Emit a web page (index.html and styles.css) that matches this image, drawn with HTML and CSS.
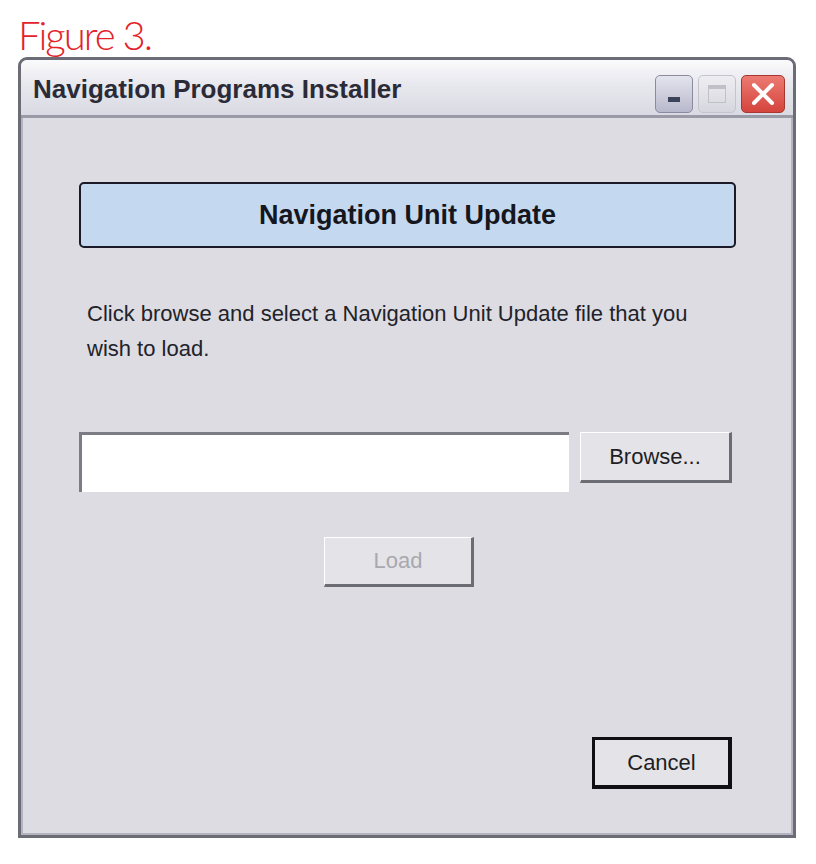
FILE: index.html
```html
<!DOCTYPE html>
<html lang="en">
<head>
    <meta charset="UTF-8">
    <meta name="viewport" content="width=device-width, initial-scale=1.0">
    <title>Navigation Programs Installer</title>
    <link rel="stylesheet" href="styles.css">
</head>
<body>
    <div class="figure-label">Figure 3.</div>
    <div class="window">
        <div class="titlebar">
            <span class="title">Navigation Programs Installer</span>
            <div class="controls">
                <div class="ctrl minimize"><span class="min-bar"></span></div>
                <div class="ctrl maximize"><span class="max-box"></span></div>
                <div class="ctrl close">
                    <svg width="26" height="26" viewBox="0 0 26 26">
                        <path d="M4 4 L22 22 M22 4 L4 22" stroke="#fff" stroke-width="4" stroke-linecap="round"/>
                    </svg>
                </div>
            </div>
        </div>
        <div class="client">
            <div class="banner">Navigation Unit Update</div>
            <p class="instructions">Click browse and select a Navigation Unit Update file that you wish to load.</p>
            <div class="file-row">
                <div class="file-input"></div>
                <button class="btn browse">Browse...</button>
            </div>
            <div class="load-row">
                <button class="btn load" disabled>Load</button>
            </div>
            <div class="footer">
                <button class="btn cancel">Cancel</button>
            </div>
        </div>
    </div>
</body>
</html>
```

FILE: styles.css
```css
body {
    margin: 0;
    padding: 0;
    background: #fff;
    font-family: 'Liberation Sans', Arial, sans-serif;
}

.figure-label {
    margin: 14px 0 0 18px;
    height: 43px;
    font-family: 'Lato', 'Liberation Sans', sans-serif;
    font-weight: 300;
    font-size: 40px;
    line-height: 43px;
    color: #e3232b;
    letter-spacing: -2px;
}

.window {
    width: 772px;
    height: 775px;
    margin-left: 18px;
    border: 3px solid #6c6c76;
    border-radius: 9px 9px 0 0;
    background: #dcdce2;
    display: flex;
    flex-direction: column;
}

.titlebar {
    height: 55px;
    display: flex;
    align-items: center;
    justify-content: space-between;
    padding: 0 8px 0 12px;
    background: linear-gradient(#fbfbfd, #e9e9ef 40%, #d9d9e3);
    border-bottom: 3px solid #9a9aa6;
    border-radius: 6px 6px 0 0;
}

.title {
    font-family: 'Liberation Sans', sans-serif;
    font-weight: bold;
    font-size: 26px;
    color: #2b2b38;
    padding-top: 4px;
}

.controls {
    display: flex;
    gap: 5px;
    padding-top: 12px;
}

.ctrl {
    width: 38px;
    height: 38px;
    border-radius: 5px;
    display: flex;
    align-items: center;
    justify-content: center;
    box-sizing: border-box;
}

.minimize {
    background: linear-gradient(#e4e4ee, #b8b8cc);
    border: 1px solid #8a8aa0;
}

.min-bar {
    width: 12px;
    height: 5px;
    background: #3c4258;
    margin-top: 12px;
}

.maximize {
    background: linear-gradient(#eeeef2, #d6d6de);
    border: 1px solid #c4c4cc;
}

.max-box {
    width: 18px;
    height: 18px;
    border: 1px solid #c0c0c8;
    border-top-width: 4px;
    box-sizing: border-box;
}

.close {
    width: 44px;
    background: linear-gradient(#ec7a72, #d4443c);
    border: 1px solid #a83632;
}

.client {
    flex: 1;
    padding: 64px 55px 0 56px;
    border: 2px solid #b4b4c0;
    border-top: none;
    display: flex;
    flex-direction: column;
}

.banner {
    height: 62px;
    line-height: 62px;
    background: #c4d9ef;
    border: 2px solid #1a1a28;
    border-radius: 5px;
    text-align: center;
    font-weight: bold;
    font-size: 27px;
    color: #16161e;
}

.instructions {
    width: 615px;
    margin: 48px 0 0 8px;
    font-size: 22px;
    line-height: 35px;
    color: #22222a;
}

.file-row {
    display: flex;
    gap: 11px;
    margin-top: 66px;
}

.file-input {
    width: 487px;
    height: 57px;
    background: #fff;
    border-top: 3px solid #7c7c84;
    border-left: 3px solid #7c7c84;
}

.btn {
    font-family: 'Liberation Sans', sans-serif;
    font-size: 22px;
    color: #1e1e24;
    background: #e4e4e8;
    border: 1px solid #fff;
    border-right: 3px solid #6c6c74;
    border-bottom: 3px solid #6c6c74;
    padding: 0;
}

.browse {
    width: 152px;
    height: 51px;
}

.load-row {
    margin-top: 45px;
    padding-left: 245px;
}

.load {
    width: 150px;
    height: 50px;
    color: #a8a8ae;
}

.footer {
    margin-top: auto;
    margin-bottom: 44px;
    display: flex;
    justify-content: flex-end;
    padding-right: 4px;
}

.cancel {
    width: 140px;
    height: 52px;
    border: 3px solid #101014;
    border-right-width: 4px;
    border-bottom-width: 4px;
}
```
